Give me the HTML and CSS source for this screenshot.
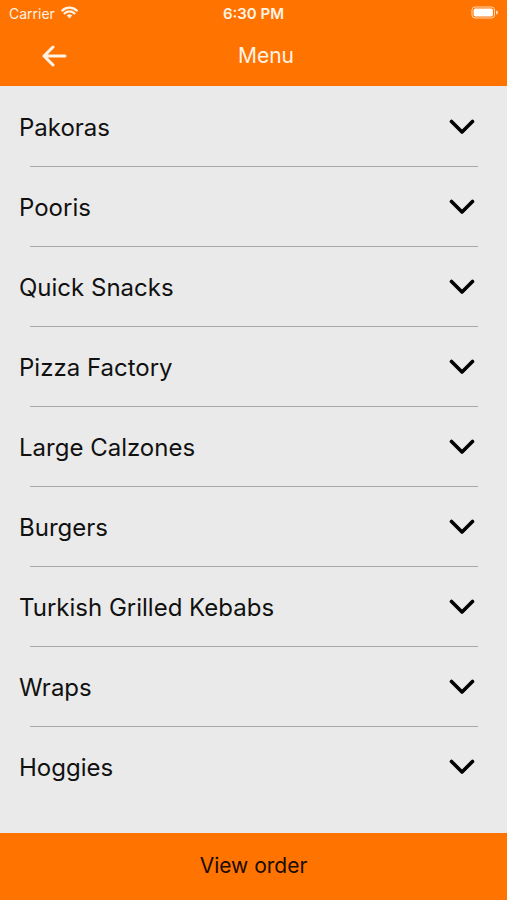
FILE: index.html
```html
<!DOCTYPE html>
<html lang="en">
<head>
    <meta charset="UTF-8">
    <meta name="viewport" content="width=device-width, initial-scale=1.0">
    <title>Menu</title>
    <link rel="stylesheet" href="styles.css">
</head>
<body>
    <div class="app">
        <div class="top">
            <div class="status-bar">
                <div class="carrier">
                    Carrier
                    <svg class="wifi" width="17" height="13" viewBox="0 0 17 13">
                        <path d="M8.5 12.5 L5.8 9.6 A3.8 3.8 0 0 1 11.2 9.6 Z" fill="#fff3e6"/>
                        <path d="M3.6 7.4 A7 7 0 0 1 13.4 7.4" stroke="#fff3e6" stroke-width="2.2" fill="none" stroke-linecap="round"/>
                        <path d="M1.2 4.6 A10.6 10.6 0 0 1 15.8 4.6" stroke="#fff3e6" stroke-width="2.2" fill="none" stroke-linecap="round"/>
                    </svg>
                </div>
                <div class="clock">6:30 PM</div>
                <div class="battery">
                    <svg width="27" height="13" viewBox="0 0 27 13">
                        <rect x="1" y="1" width="22.5" height="11" rx="3" fill="none" stroke="#ffd9b3" stroke-width="1"/>
                        <rect x="2.6" y="2.6" width="19.3" height="7.8" rx="1.6" fill="#ffffff"/>
                        <path d="M25 4.5 A2 2 0 0 1 25 8.5 Z" fill="#ffd9b3"/>
                    </svg>
                </div>
            </div>
            <div class="nav-bar">
                <svg class="back" width="26" height="22" viewBox="0 0 26 22">
                    <path d="M24 11 H3 M12 2 L3 11 L12 20" stroke="#fff3e6" stroke-width="3" fill="none" stroke-linecap="round" stroke-linejoin="round"/>
                </svg>
                <div class="title">Menu</div>
            </div>
        </div>

        <ul class="menu">
            <li class="menu-item"><span>Pakoras</span><svg class="chevron" width="26" height="16" viewBox="0 0 26 16"><path d="M2.5 2.5 L13 13 L23.5 2.5" stroke="#000" stroke-width="3.6" fill="none" stroke-linecap="round" stroke-linejoin="round"/></svg></li>
            <li class="menu-item"><span>Pooris</span><svg class="chevron" width="26" height="16" viewBox="0 0 26 16"><path d="M2.5 2.5 L13 13 L23.5 2.5" stroke="#000" stroke-width="3.6" fill="none" stroke-linecap="round" stroke-linejoin="round"/></svg></li>
            <li class="menu-item"><span>Quick Snacks</span><svg class="chevron" width="26" height="16" viewBox="0 0 26 16"><path d="M2.5 2.5 L13 13 L23.5 2.5" stroke="#000" stroke-width="3.6" fill="none" stroke-linecap="round" stroke-linejoin="round"/></svg></li>
            <li class="menu-item"><span>Pizza Factory</span><svg class="chevron" width="26" height="16" viewBox="0 0 26 16"><path d="M2.5 2.5 L13 13 L23.5 2.5" stroke="#000" stroke-width="3.6" fill="none" stroke-linecap="round" stroke-linejoin="round"/></svg></li>
            <li class="menu-item"><span>Large Calzones</span><svg class="chevron" width="26" height="16" viewBox="0 0 26 16"><path d="M2.5 2.5 L13 13 L23.5 2.5" stroke="#000" stroke-width="3.6" fill="none" stroke-linecap="round" stroke-linejoin="round"/></svg></li>
            <li class="menu-item"><span>Burgers</span><svg class="chevron" width="26" height="16" viewBox="0 0 26 16"><path d="M2.5 2.5 L13 13 L23.5 2.5" stroke="#000" stroke-width="3.6" fill="none" stroke-linecap="round" stroke-linejoin="round"/></svg></li>
            <li class="menu-item"><span>Turkish Grilled Kebabs</span><svg class="chevron" width="26" height="16" viewBox="0 0 26 16"><path d="M2.5 2.5 L13 13 L23.5 2.5" stroke="#000" stroke-width="3.6" fill="none" stroke-linecap="round" stroke-linejoin="round"/></svg></li>
            <li class="menu-item"><span>Wraps</span><svg class="chevron" width="26" height="16" viewBox="0 0 26 16"><path d="M2.5 2.5 L13 13 L23.5 2.5" stroke="#000" stroke-width="3.6" fill="none" stroke-linecap="round" stroke-linejoin="round"/></svg></li>
            <li class="menu-item"><span>Hoggies</span><svg class="chevron" width="26" height="16" viewBox="0 0 26 16"><path d="M2.5 2.5 L13 13 L23.5 2.5" stroke="#000" stroke-width="3.6" fill="none" stroke-linecap="round" stroke-linejoin="round"/></svg></li>
        </ul>

        <button class="view-order">View order</button>
    </div>
</body>
</html>
```

FILE: styles.css
```css
html, body {
    margin: 0;
    padding: 0;
}
body {
    font-family: Inter, "Liberation Sans", Arial, sans-serif;
    background: #eaeaea;
}
.app {
    width: 507px;
    height: 900px;
    display: flex;
    flex-direction: column;
    overflow: hidden;
}
.top {
    background: #ff7300;
    color: #fff3e6;
}
.status-bar {
    height: 28px;
    display: grid;
    grid-template-columns: 1fr auto 1fr;
    align-items: center;
    padding: 0 9px;
    font-size: 14px;
}
.carrier {
    display: flex;
    align-items: center;
    gap: 6px;
    padding-bottom: 2px;
}
.wifi {
    margin-top: -2px;
}
.clock {
    font-size: 15px;
    font-weight: 600;
    padding-bottom: 2px;
}
.battery {
    justify-self: end;
    display: flex;
    margin-top: -4px;
}
.nav-bar {
    height: 58px;
    display: grid;
    grid-template-columns: 1fr auto 1fr;
    align-items: center;
    padding: 0 41px;
}
.back {
    margin-top: -3px;
}
.title {
    font-size: 21px;
    margin-left: 25px;
    margin-top: -4px;
}
.menu {
    list-style: none;
    margin: 0;
    padding: 1px 0 0;
    flex: 1;
}
.menu-item {
    height: 79px;
    display: flex;
    align-items: center;
    justify-content: space-between;
    padding: 2px 32px 0 19px;
    box-sizing: border-box;
    font-size: 24px;
    color: #111;
    position: relative;
    margin-bottom: 1px;
}
.menu-item + .menu-item::before {
    content: "";
    position: absolute;
    left: 30px;
    right: 29px;
    top: -1px;
    height: 1px;
    background: #a8a8a8;
}
.chevron {
    margin-top: -2px;
}
.view-order {
    height: 67px;
    border: none;
    background: #ff7300;
    color: #1a0c00;
    font-family: inherit;
    font-size: 21px;
    cursor: pointer;
    padding: 0 0 2px;
}
```
